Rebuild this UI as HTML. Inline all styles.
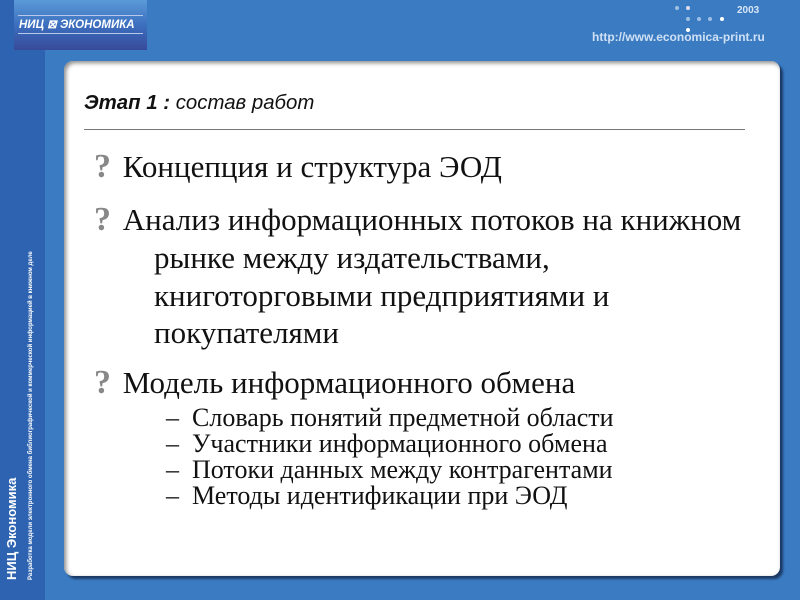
<!DOCTYPE html>
<html><head><meta charset="utf-8"><style>
*{margin:0;padding:0}
body{width:800px;height:600px;overflow:hidden;background:#3a7bc2;position:relative;font-family:"Liberation Sans",sans-serif}
.strip{position:absolute;left:0;top:0;width:45px;height:600px;background:#2d63b0}
.logo{position:absolute;left:14px;top:0;width:133px;height:50px;background:linear-gradient(#5b9ad8,#3c6fbf 50%,#384a9a)}
.logo .ln{position:absolute;left:4px;right:4px;height:1px;background:#b8c8ea}
.logo span{position:absolute;left:5px;top:17px;color:#fff;font:italic bold 11.5px "Liberation Sans",sans-serif;white-space:nowrap}
.url{position:absolute;left:592px;top:30px;color:#cfe0f5;font:bold 12px "Liberation Sans",sans-serif;white-space:nowrap}
.yr{position:absolute;left:737px;top:5px;color:#d8e6f7;font:bold 10px "Liberation Sans",sans-serif}
.d{position:absolute;width:4px;height:4px;border-radius:50%;background:#9fc0e6}
.panel{position:absolute;left:64px;top:61px;width:716px;height:515px;background:#fff;border-radius:9px;box-shadow:3px 3px 2px #1c3a66, inset 2px 2px 4px #888}
.title{position:absolute;left:84px;top:92px;font:italic 20.4px "Liberation Sans",sans-serif;color:#111;white-space:nowrap}
.hr{position:absolute;left:84px;top:129px;width:661px;height:1px;background:#777}
.t{position:absolute;font-family:"Liberation Serif",serif;color:#111;font-size:31px;line-height:38px;white-space:nowrap}
.q{color:#888;font-weight:bold;font-size:34px;margin-right:4px}
.s{position:absolute;left:166px;font-family:"Liberation Serif",serif;font-size:26px;color:#111;line-height:26px;white-space:nowrap}
.vt{position:absolute;color:#fff;transform:rotate(-90deg);transform-origin:left top;white-space:nowrap}
</style></head><body>
<div class="strip"></div>
<div class="logo"><div class="ln" style="top:15px"></div><div class="ln" style="top:33px"></div><span>НИЦ ⊠ ЭКОНОМИКА</span></div>
<div class="yr">2003</div>
<div class="d" style="left:675px;top:6px"></div><div class="d" style="left:686px;top:6px;background:#dde"></div>
<div class="d" style="left:686px;top:17px"></div><div class="d" style="left:697px;top:17px"></div><div class="d" style="left:708px;top:17px"></div><div class="d" style="left:720px;top:17px;background:#fff"></div>
<div class="d" style="left:686px;top:28px;background:#fff"></div>
<div class="url">http://www.economica-print.ru</div>
<div class="vt" style="left:4px;top:580px;font:bold 13px 'Liberation Sans',sans-serif">НИЦ Экономика</div>
<div class="vt" style="left:28px;top:580px;font:bold 6px 'Liberation Sans',sans-serif">Разработка модели электронного обмена библиографической и коммерческой информацией в книжном деле</div>
<div class="panel"></div>
<div class="title"><b>Этап 1 :</b> состав работ</div>
<div class="hr"></div>
<div class="t" style="left:94px;top:148px"><span class="q">?</span> Концепция и структура ЭОД</div>
<div class="t" style="left:94px;top:201px"><span class="q">?</span> Анализ информационных потоков на книжном</div>
<div class="t" style="left:154px;top:239px">рынке между издательствами,</div>
<div class="t" style="left:154px;top:277px">книготорговыми предприятиями и</div>
<div class="t" style="left:154px;top:314px">покупателями</div>
<div class="t" style="left:94px;top:364px"><span class="q">?</span> Модель информационного обмена</div>
<div class="s" style="top:405px">–&nbsp; Словарь понятий предметной области</div>
<div class="s" style="top:431px">–&nbsp; Участники информационного обмена</div>
<div class="s" style="top:457px">–&nbsp; Потоки данных между контрагентами</div>
<div class="s" style="top:483px">–&nbsp; Методы идентификации при ЭОД</div>
</body></html>
